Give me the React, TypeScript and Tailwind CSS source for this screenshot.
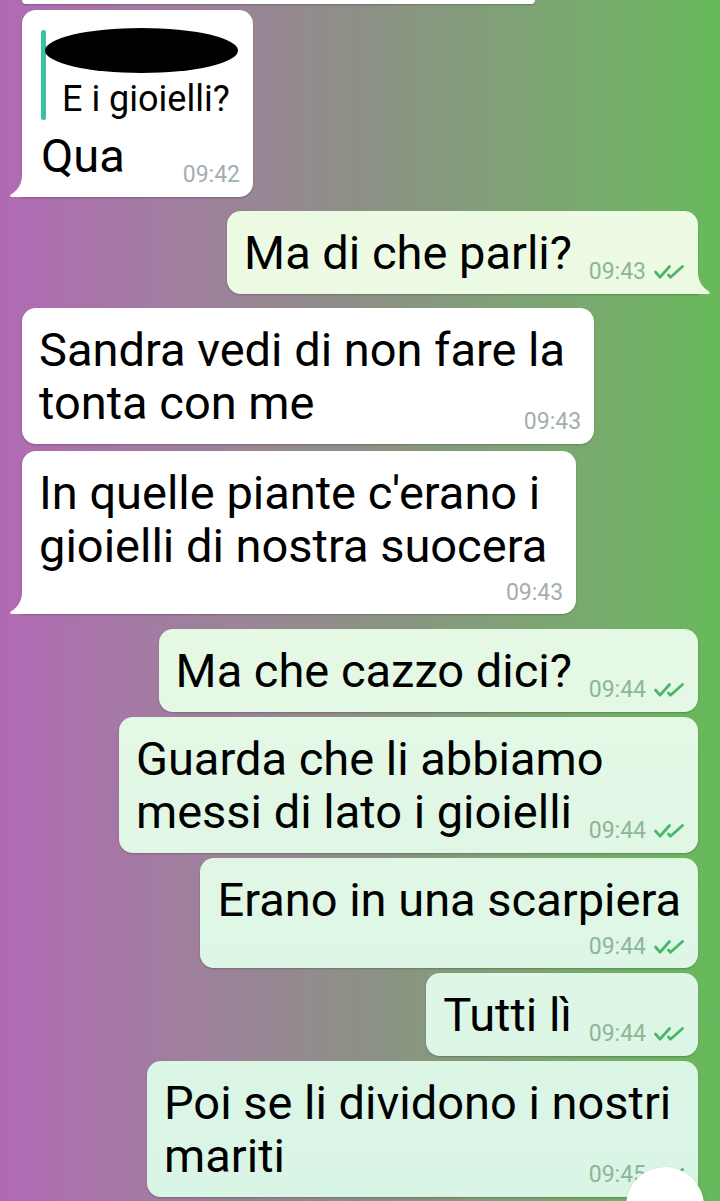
import type { ReactNode } from "react";

function Checks() {
  return (
    <svg width="31" height="14" viewBox="0 0 31 14" fill="none" stroke="#48b868" strokeWidth="2.8" strokeLinecap="round" strokeLinejoin="round">
      <path d="M1.5 7 6 12.2 15.5 1.5" />
      <path d="M14.5 10 16.5 12.2 28.5 1.5" />
    </svg>
  );
}

function Meta({ time, out }: { time: string; out?: boolean }) {
  return (
    <div className="flex items-center gap-[8px] h-[28px]">
      <span className={`text-[23px] leading-[28px] ${out ? "text-[#8db695]" : "text-[#a2aeb2]"}`}>{time}</span>
      {out && <Checks />}
    </div>
  );
}

function TailIn() {
  return (
    <svg className="absolute left-[-12px] bottom-0" width="13" height="22" viewBox="0 0 13 22">
      <path d="M13 0 V22 H2 C0 22 -0.5 20.5 1 19.5 C7 15.5 12 10 12 0 Z" fill="#ffffff" />
    </svg>
  );
}

function TailOut() {
  return (
    <svg className="absolute right-[-12px] bottom-0" width="13" height="22" viewBox="0 0 13 22">
      <path d="M0 0 V22 H11 C13 22 13.5 20.5 12 19.5 C6 15.5 1 10 1 0 Z" fill="#ebf9e4" />
    </svg>
  );
}

interface BubbleProps {
  out?: boolean;
  tail?: boolean;
  lines: string[];
  time: string;
  below?: boolean;
  className?: string;
  children?: ReactNode;
}

function Bubble({ out, tail, lines, time, below, className = "", children }: BubbleProps) {
  const shape = out
    ? `self-end mr-[22px] bg-linear-to-b from-[#f2fce3] to-[#d9f5e6] bg-fixed ${tail ? "rounded-[14px] rounded-br-none" : "rounded-[14px]"}`
    : `self-start ml-[22px] bg-white ${tail ? "rounded-[14px] rounded-bl-none" : "rounded-[14px]"}`;
  const textPad = out ? "pr-[4px]" : "pr-[16px]";
  const text = lines.map((l, i) => (
    <span key={i}>
      {l}
      {i === lines.length - 1 && !below && (
        <span className={`inline-block ${out ? "w-[113px]" : "w-[60px]"}`} />
      )}
      {i < lines.length - 1 && <br />}
    </span>
  ));
  return (
    <div className={`relative pl-[17px] pr-[13px] pt-[15px] shadow-[0_1px_2px_rgba(0,0,0,0.22)] ${shape} ${className}`}>
      {children}
      {below ? (
        <>
          <div className={`text-[47px] leading-[53px] whitespace-nowrap ${textPad}`}>{text}</div>
          <div className="flex justify-end mt-[7px] pb-[7px]">
            <Meta time={time} out={out} />
          </div>
        </>
      ) : (
        <div className="grid">
          <div className={`[grid-area:1/1] text-[47px] leading-[53px] whitespace-nowrap pb-[15px] ${out ? "" : textPad}`}>{text}</div>
          <div className="[grid-area:1/1] self-end justify-self-end pb-[8px]">
            <Meta time={time} out={out} />
          </div>
        </div>
      )}
      {tail && (out ? <TailOut /> : <TailIn />)}
    </div>
  );
}

export default function App() {
  return (
    <div className="relative w-[720px] h-[1201px] overflow-hidden bg-linear-to-r from-[#b169b5] via-[#8d9086] to-[#67b95b] font-['Roboto','Liberation_Sans',sans-serif] text-black">
      <div className="flex flex-col">
        {/* tail end of the previous message */}
        <div className="ml-[22px] w-[513px] h-[4px] bg-white rounded-b-[10px] shadow-[0_1px_2px_rgba(0,0,0,0.22)]" />

        <Bubble tail lines={["Qua"]} time="09:42" className="mt-[6px] !pt-[20px] !pl-[19px]">
          <div className="relative flex w-[199px] h-[90px] mb-[9px]">
            <div className="w-[5px] rounded-full bg-[#3dbfa6]" />
            <div className="pl-[16px] flex flex-col">
              <div className="h-[48px]" />
              <div className="text-[36px] leading-[42px]">E i gioielli?</div>
            </div>
            <div className="absolute left-[4px] top-[-2px] w-[193px] h-[45px] rounded-[50%] bg-black" />
          </div>
        </Bubble>

        <Bubble out tail lines={["Ma di che parli?"]} time="09:43" className="mt-[14px]" />

        <Bubble lines={["Sandra vedi di non fare la", "tonta con me"]} time="09:43" className="mt-[14px]" />
        <Bubble tail below lines={["In quelle piante c'erano i", "gioielli di nostra suocera"]} time="09:43" className="mt-[7px]" />

        <Bubble out lines={["Ma che cazzo dici?"]} time="09:44" className="mt-[15px]" />
        <Bubble out lines={["Guarda che li abbiamo", "messi di lato i gioielli"]} time="09:44" className="mt-[5px]" />
        <Bubble out below lines={["Erano in una scarpiera"]} time="09:44" className="mt-[5px]" />
        <Bubble out lines={["Tutti lì"]} time="09:44" className="mt-[5px]" />
        <Bubble out lines={["Poi se li dividono i nostri", "mariti"]} time="09:45" className="mt-[5px] w-[551px]" />
      </div>

      {/* scroll-down button peeking in at the bottom */}
      <div className="absolute left-[626px] top-[1167px] w-[78px] h-[78px] rounded-full bg-white shadow-[0_1px_3px_rgba(0,0,0,0.2)]" />
    </div>
  );
}
